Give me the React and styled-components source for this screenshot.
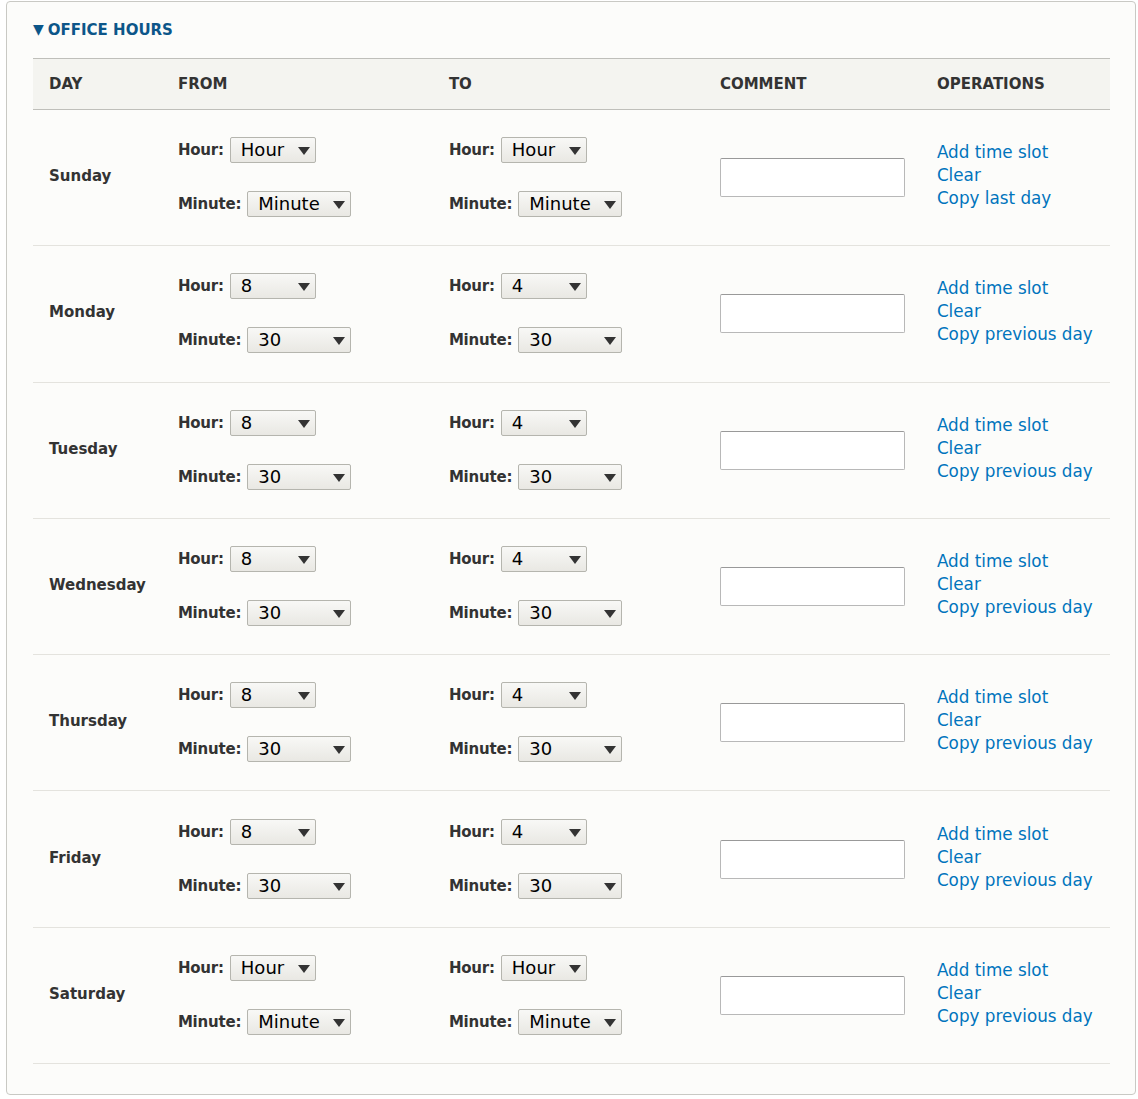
import styled, { createGlobalStyle } from 'styled-components';

const days = [
  { name: 'Sunday', from: null, to: null, copy: 'Copy last day' },
  { name: 'Monday', from: ['8', '30'], to: ['4', '30'] },
  { name: 'Tuesday', from: ['8', '30'], to: ['4', '30'] },
  { name: 'Wednesday', from: ['8', '30'], to: ['4', '30'] },
  { name: 'Thursday', from: ['8', '30'], to: ['4', '30'] },
  { name: 'Friday', from: ['8', '30'], to: ['4', '30'] },
  { name: 'Saturday', from: null, to: null },
];

function TimePicker({ value }) {
  return (
    <Picker>
      <PickLine>
        <Label>Hour:</Label>
        <Select width={86}>{value ? value[0] : 'Hour'}</Select>
      </PickLine>
      <PickLine>
        <Label>Minute:</Label>
        <Select width={104}>{value ? value[1] : 'Minute'}</Select>
      </PickLine>
    </Picker>
  );
}

function App() {
  return (
    <>
      <GlobalStyle />
      <Fieldset>
        <Legend>
          <Caret>▼</Caret>OFFICE HOURS
        </Legend>
        <Table>
          <thead>
            <tr>
              <Th w={128}>Day</Th>
              <Th w={271}>From</Th>
              <Th w={271}>To</Th>
              <Th w={217}>Comment</Th>
              <Th>Operations</Th>
            </tr>
          </thead>
          <tbody>
            {days.map((d) => (
              <Row key={d.name}>
                <DayCell>{d.name}</DayCell>
                <Td><TimePicker value={d.from} /></Td>
                <Td><TimePicker value={d.to} /></Td>
                <Td><Comment type="text" /></Td>
                <Td>
                  <Ops>
                    <Link href="#">Add time slot</Link>
                    <Link href="#">Clear</Link>
                    <Link href="#">{d.copy || 'Copy previous day'}</Link>
                  </Ops>
                </Td>
              </Row>
            ))}
          </tbody>
        </Table>
      </Fieldset>
    </>
  );
}

const GlobalStyle = createGlobalStyle`
  body {
    margin: 0;
    background: #fff;
    font-family: "DejaVu Sans", "Lucida Grande", sans-serif;
    color: #333;
  }
`

const Fieldset = styled.div`
  margin: 1px 0 0 6px;
  width: 1130px;
  height: 1094px;
  box-sizing: border-box;
  border: 1px solid #c9c9c4;
  border-radius: 4px;
  background: #fcfcfa;
  padding: 17px 25px 0 26px;
`
const Legend = styled.div`
  display: flex;
  align-items: center;
  height: 22px;
  font-size: 15px;
  font-weight: bold;
  color: #0c5689;
  margin-bottom: 17px;
`
const Caret = styled.span`
  font-size: 14px;
  margin-right: 4px;
  position: relative;
  top: -1px;
`
const Table = styled.table`
  width: 1077px;
  border-collapse: collapse;
  border-spacing: 0;
`
const Th = styled.th`
  width: ${(p) => (p.w ? `${p.w}px` : 'auto')};
  height: 51px;
  padding: 0 16px;
  box-sizing: border-box;
  background: #f4f4f0;
  border-top: 1px solid #bfbfba;
  border-bottom: 1px solid #bfbfba;
  text-align: left;
  text-transform: uppercase;
  font-size: 15px;
  font-weight: bold;
  color: #333;
`
const Row = styled.tr`
  border-bottom: 1px solid #e4e3de;
  height: 136.3px;
`
const Td = styled.td`
  padding: 0 16px;
  vertical-align: middle;
`
const DayCell = styled(Td)`
  padding-bottom: 3px;
  font-size: 15px;
  font-weight: bold;
  color: #333;
`
const Picker = styled.div`
  display: flex;
  flex-direction: column;
  gap: 28px;
  margin-top: -1px;
`
const PickLine = styled.div`
  display: flex;
  align-items: center;
  gap: 6px;
`
const Label = styled.span`
  font-size: 15px;
  font-weight: bold;
  color: #333;
  letter-spacing: -0.2px;
`
const Select = styled.div`
  position: relative;
  width: ${(p) => p.width}px;
  height: 26px;
  box-sizing: border-box;
  border: 1px solid #b5b5ae;
  border-radius: 2px;
  background: linear-gradient(#f8f8f6, #e9e8e3);
  padding-left: 10px;
  font-size: 18px;
  line-height: 24px;
  color: #000;

  &::after {
    content: '';
    position: absolute;
    right: 5px;
    top: 9px;
    border-left: 6px solid transparent;
    border-right: 6px solid transparent;
    border-top: 8px solid #333;
  }
`
const Comment = styled.input`
  display: block;
  width: 185px;
  height: 39px;
  box-sizing: border-box;
  border: 1px solid #b8b8b8;
  border-top-color: #999;
  border-radius: 2px;
  background: #fff;
  outline: 0;
`
const Ops = styled.div`
  display: flex;
  flex-direction: column;
  line-height: 23px;
  margin-top: -4px;
`
const Link = styled.a`
  font-size: 16.8px;
  color: #0074bd;
  text-decoration: none;
  align-self: flex-start;
`

export default App
